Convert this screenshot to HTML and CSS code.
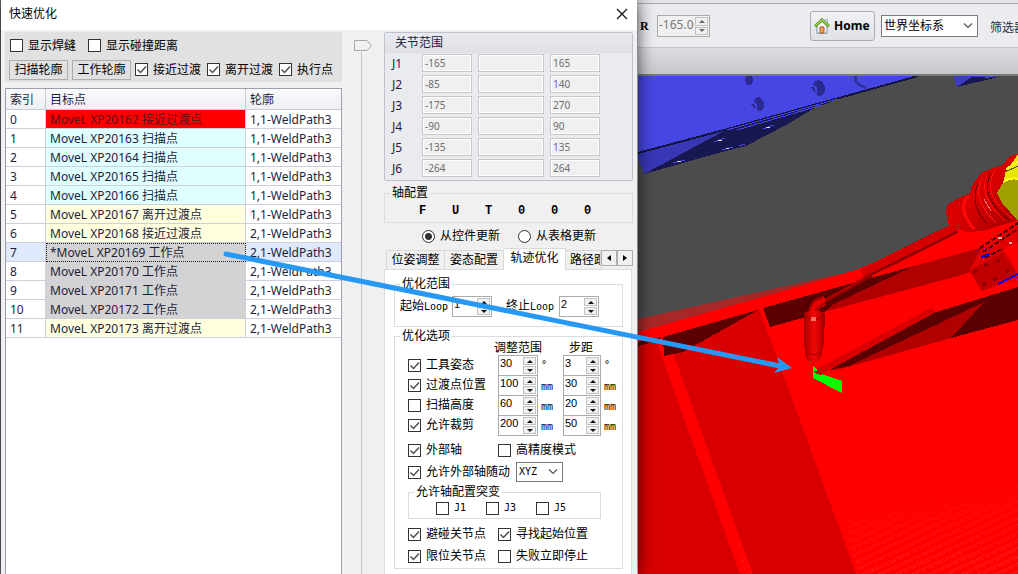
FILE: index.html
```html
<!DOCTYPE html>
<html lang="zh-CN">
<head>
<meta charset="utf-8">
<title>快速优化</title>
<link rel="stylesheet" href="styles.css">
</head>
<body>
<div class="app">
<section class="dialog">
  <header class="titlebar">
    <h1>快速优化</h1>
    <button class="close" aria-label="关闭"><svg width="12" height="12" viewBox="0 0 12 12"><path d="M1 1L11 11M11 1L1 11" stroke="#111" stroke-width="1.2"/></svg></button>
  </header>
  <div class="dialog-body">
    <div class="left">
      <div class="options">
        <div class="row first">
          <label class="check"><input type="checkbox">显示焊缝</label>
          <label class="check"><input type="checkbox">显示碰撞距离</label>
        </div>
        <div class="row second">
          <button class="push">扫描轮廓</button>
          <button class="push">工作轮廓</button>
          <label class="check"><input type="checkbox" checked>接近过渡</label>
          <label class="check"><input type="checkbox" checked>离开过渡</label>
          <label class="check"><input type="checkbox" checked>执行点</label>
        </div>
      </div>
      <div class="grid">
        <table>
          <colgroup><col class="c-index"><col class="c-target"><col></colgroup>
          <thead><tr><th>索引</th><th>目标点</th><th>轮廓</th></tr></thead>
          <tbody>
            <tr><td>0</td><td class="red">MoveL XP20162 接近过渡点</td><td>1,1-WeldPath3</td></tr>
            <tr><td>1</td><td class="cyan">MoveL XP20163 扫描点</td><td>1,1-WeldPath3</td></tr>
            <tr><td>2</td><td class="cyan">MoveL XP20164 扫描点</td><td>1,1-WeldPath3</td></tr>
            <tr><td>3</td><td class="cyan">MoveL XP20165 扫描点</td><td>1,1-WeldPath3</td></tr>
            <tr><td>4</td><td class="cyan">MoveL XP20166 扫描点</td><td>1,1-WeldPath3</td></tr>
            <tr><td>5</td><td class="yellow">MoveL XP20167 离开过渡点</td><td>1,1-WeldPath3</td></tr>
            <tr><td>6</td><td class="yellow">MoveL XP20168 接近过渡点</td><td>2,1-WeldPath3</td></tr>
            <tr class="selected"><td>7</td><td class="gray focus">*MoveL XP20169 工作点</td><td>2,1-WeldPath3</td></tr>
            <tr><td>8</td><td class="gray">MoveL XP20170 工作点</td><td>2,1-WeldPath3</td></tr>
            <tr><td>9</td><td class="gray">MoveL XP20171 工作点</td><td>2,1-WeldPath3</td></tr>
            <tr><td>10</td><td class="gray">MoveL XP20172 工作点</td><td>2,1-WeldPath3</td></tr>
            <tr><td>11</td><td class="yellow">MoveL XP20173 离开过渡点</td><td>2,1-WeldPath3</td></tr>
          </tbody>
        </table>
      </div>
    </div>
    <div class="track"><input type="range" min="0" max="100" value="0" aria-label="位置"></div>
    <div class="right">
      <section class="joints">
        <h2>关节范围</h2>
        <div class="joint-grid">
          <label for="j1">J1</label><input id="j1" value="-165" disabled><input aria-label="J1 当前" disabled><input aria-label="J1 上限" value="165" disabled>
          <label for="j2">J2</label><input id="j2" value="-85" disabled><input aria-label="J2 当前" disabled><input aria-label="J2 上限" value="140" disabled>
          <label for="j3">J3</label><input id="j3" value="-175" disabled><input aria-label="J3 当前" disabled><input aria-label="J3 上限" value="270" disabled>
          <label for="j4">J4</label><input id="j4" value="-90" disabled><input aria-label="J4 当前" disabled><input aria-label="J4 上限" value="90" disabled>
          <label for="j5">J5</label><input id="j5" value="-135" disabled><input aria-label="J5 当前" disabled><input aria-label="J5 上限" value="135" disabled>
          <label for="j6">J6</label><input id="j6" value="-264" disabled><input aria-label="J6 当前" disabled><input aria-label="J6 上限" value="264" disabled>
        </div>
      </section>
      <fieldset class="axis">
        <legend>轴配置</legend>
        <div class="flags"><span>F</span><span>U</span><span>T</span><span>0</span><span>0</span><span>0</span></div>
      </fieldset>
      <div class="sources">
        <label class="check"><input type="radio" name="source" checked>从控件更新</label>
        <label class="check"><input type="radio" name="source">从表格更新</label>
      </div>
      <div class="tabs">
        <button class="tab">位姿调整</button><button class="tab">姿态配置</button><button class="tab active">轨迹优化</button><button class="tab cut">路径跟踪</button>
        <button class="scroll" aria-label="向左"><i class="tri left-tri"></i></button><button class="scroll" aria-label="向右"><i class="tri right-tri"></i></button>
      </div>
      <div class="page">
        <fieldset class="range">
          <legend>优化范围</legend>
          <div class="loops">
            <label for="start">起始<span class="mono">Loop</span></label>
            <div class="spin tall"><input id="start" value="1"><span class="arrows"><button aria-label="增加"></button><button aria-label="减少"></button></span></div>
            <label for="end" class="end">终止<span class="mono">Loop</span></label>
            <div class="spin tall"><input id="end" value="2"><span class="arrows"><button aria-label="增加"></button><button aria-label="减少"></button></span></div>
          </div>
        </fieldset>
        <fieldset class="choices">
          <legend>优化选项</legend>
          <div class="tuning">
            <span></span><span class="head wide">调整范围</span><span class="head step">步距</span>
            <label class="check"><input type="checkbox" checked>工具姿态</label>
            <div class="spin"><input aria-label="工具姿态 调整范围" value="30"><span class="arrows"><button aria-label="增加"></button><button aria-label="减少"></button></span></div><span class="unit deg">°</span>
            <div class="spin"><input aria-label="工具姿态 步距" value="3"><span class="arrows"><button aria-label="增加"></button><button aria-label="减少"></button></span></div><span class="unit deg">°</span>
            <label class="check"><input type="checkbox" checked>过渡点位置</label>
            <div class="spin"><input aria-label="过渡点位置 调整范围" value="100"><span class="arrows"><button aria-label="增加"></button><button aria-label="减少"></button></span></div><span class="unit">mm</span>
            <div class="spin"><input aria-label="过渡点位置 步距" value="30"><span class="arrows"><button aria-label="增加"></button><button aria-label="减少"></button></span></div><span class="unit">mm</span>
            <label class="check"><input type="checkbox">扫描高度</label>
            <div class="spin"><input aria-label="扫描高度 调整范围" value="60"><span class="arrows"><button aria-label="增加"></button><button aria-label="减少"></button></span></div><span class="unit">mm</span>
            <div class="spin"><input aria-label="扫描高度 步距" value="20"><span class="arrows"><button aria-label="增加"></button><button aria-label="减少"></button></span></div><span class="unit">mm</span>
            <label class="check"><input type="checkbox" checked>允许裁剪</label>
            <div class="spin"><input aria-label="允许裁剪 调整范围" value="200"><span class="arrows"><button aria-label="增加"></button><button aria-label="减少"></button></span></div><span class="unit">mm</span>
            <div class="spin"><input aria-label="允许裁剪 步距" value="50"><span class="arrows"><button aria-label="增加"></button><button aria-label="减少"></button></span></div><span class="unit">mm</span>
          </div>
          <div class="pairs">
            <label class="check"><input type="checkbox" checked>外部轴</label>
            <label class="check"><input type="checkbox">高精度模式</label>
          </div>
          <div class="follow">
            <label class="check"><input type="checkbox" checked>允许外部轴随动</label>
            <select class="combo axes" aria-label="随动轴"><option>XYZ</option></select>
          </div>
          <fieldset class="jumps">
            <legend>允许轴配置突变</legend>
            <div class="jump-row">
              <label class="check"><input type="checkbox"><span class="mono">J1</span></label>
              <label class="check"><input type="checkbox"><span class="mono">J3</span></label>
              <label class="check"><input type="checkbox"><span class="mono">J5</span></label>
            </div>
          </fieldset>
          <div class="pairs">
            <label class="check"><input type="checkbox" checked>避碰关节点</label>
            <label class="check"><input type="checkbox" checked>寻找起始位置</label>
            <label class="check"><input type="checkbox" checked>限位关节点</label>
            <label class="check"><input type="checkbox">失败立即停止</label>
          </div>
        </fieldset>
      </div>
    </div>
  </div>
</section>
<main class="workspace">
  <div class="toolbar">
    <label for="rot" class="rot-label">R</label>
    <div class="spin rot"><input id="rot" value="-165.000" disabled><span class="arrows"><button aria-label="增加" disabled></button><button aria-label="减少" disabled></button></span></div>
    <button class="home">
      <svg width="16" height="16" viewBox="0 0 16 16"><path d="M3 7v8.300h10V7L8 2.500z" fill="#f7f8fb" stroke="#7b8bb0"/><path d="M11.500 1.500h2v4l-2-2z" fill="#e8edf5" stroke="#8a98b5" stroke-width=".7"/><path d="M1 8.300L8 2l7 6.300" fill="none" stroke="#4f8a1c" stroke-width="3"/><path d="M1.200 8L8 1.900 14.800 8" fill="none" stroke="#a7d85c" stroke-width="1.300"/><path d="M6 15V9h4v6z" fill="#eda65b" stroke="#a85619"/></svg>
      Home
    </button>
    <select class="combo coord" aria-label="坐标系"><option>世界坐标系</option></select>
    <span class="filter">筛选器</span>
  </div>
  <div class="strip"></div>
  <svg class="scene" viewBox="638 76 380 498" preserveAspectRatio="xMinYMin slice" shape-rendering="crispEdges">
    <defs>
      <linearGradient id="tube" x1="0" x2="1"><stop offset="0" stop-color="#900"/><stop offset=".2" stop-color="#c00"/><stop offset=".5" stop-color="#f00808"/><stop offset=".8" stop-color="#c80000"/><stop offset="1" stop-color="#800"/></linearGradient>
      <linearGradient id="arm" x1="0" y1="0" x2="1" y2="1"><stop offset="0" stop-color="#900"/><stop offset=".45" stop-color="#dd0000"/><stop offset="1" stop-color="#a00000"/></linearGradient>
      <linearGradient id="fade" x1="0" y1="0" x2=".25" y2="1"><stop offset=".1" stop-color="#fff" stop-opacity="0"/><stop offset="1" stop-color="#fff"/></linearGradient>
      <pattern id="grain" width="8" height="7" patternUnits="userSpaceOnUse" patternTransform="rotate(-25)"><path d="M0 2H8M2 4H7" stroke="#ff3030" stroke-width="1" stroke-dasharray="1 1"/></pattern>
      <mask id="grain-mask"><path d="M846 520L1018 485V574H857z" fill="url(#fade)"/></mask>
    </defs>
    <rect x="638" y="76" width="380" height="498" fill="#4c4c4c"/>
    <path d="M638 76H918L838 98 724 130 638 153z" fill="#4646e2"/>
    <path d="M638 153L724 131 644 174 638 158z" fill="#3838b6"/>
    <path d="M724 131L838 98 829 103 816 107 788 124 746 146 722 152 644 174z" fill="#181850"/>
    <path d="M638 153L724 130 918 76" fill="none" stroke="#141440" stroke-width="2"/>
    <path d="M727 130L838 99M737 130L822 105" stroke="#4646e2" fill="none"/>
    <path d="M855 76q0 7 5 9l6 3" fill="none" stroke="#3030a0" stroke-width="3"/>
    <ellipse cx="749" cy="80" rx="4" ry="5" fill="#2a2a90"/>
    <ellipse cx="759" cy="104" rx="5" ry="7" fill="#2a2a90" transform="rotate(-15 759 104)"/>
    <ellipse cx="819" cy="88" rx="6" ry="8" fill="#2a2a90" transform="rotate(-15 819 88)"/>
    <path d="M752 102q5 1 4 7M812 86q6 0 4 8" stroke="#4646e2" stroke-width="2" fill="none"/>
    <path d="M752 104l3 4M812 87l3 5" stroke="#2a2a90" stroke-width="2"/>
    <path d="M763 129l11-4M714 142l11-4M722 150l11-3M673 163l12-3M739 146l6-2" stroke="#4646e2" stroke-width="1"/>
    <path d="M766 128l4-1M718 141l4-1M726 149l3-1M677 162l4-1" stroke="#dde" stroke-width="1"/>
    <path d="M953 76H998L957 87z" fill="#3c3cc2"/><path d="M972 77H998L957 87z" fill="#181850"/><path d="M985 78l8-2" stroke="#5555f0"/>
    <path d="M638 319L853 271 853 275 638 334z" fill="#a82828"/>
    <path d="M638 332L780 292 853 271 950 232 1018 218V574H638z" fill="#f00"/>
    <path d="M763 308L914 266 834 304 824 312 770 327z" fill="#5a0000"/>
    <path d="M914 266L984 247 969 273 824 312 834 304z" fill="#b00000"/>
    <path d="M638 344L661 338 658 346 740 574H638z" fill="#d80000"/>
    <path d="M638 342L661 337 659 341 638 346z" fill="#5a0000"/>
    <path d="M663 337L759 309 789 390 856 574H753L673 353z" fill="#d80000"/>
    <path d="M663 337L758 310 683 352 664 356z" fill="#5a0000"/>
    <path d="M933 313L1018 287V320L951 338 984 302 936 327z" fill="#5a0000"/>
    <path d="M984 302L951 338 830 372 849 364z" fill="#b00000"/>
    <path d="M821 372L933 313 984 302 849 366z" fill="#5a0000"/>
    <path d="M813 371L931 308 936 312 820 375z" fill="#d80000"/>
    <path d="M846 520L1018 485V574H857z" fill="url(#grain)" mask="url(#grain-mask)"/>
    <path d="M740 540l13 34h-12z" fill="url(#grain)" opacity=".5"/>
    <path d="M821 303L872 275" stroke="#8c0000" stroke-width="4"/><path d="M822 302L872 274" stroke="#b00000" stroke-width="2"/>
    <path d="M814 319V310Q815 303 825 301" fill="none" stroke="#b40000" stroke-width="10"/>
    <path d="M813 319V309Q815 303 825 300" fill="none" stroke="#ee0000" stroke-width="4"/>
    <path d="M863 274L956 228" stroke="#960000" stroke-width="11"/><path d="M862 273L955 227" stroke="#d60000" stroke-width="8"/>
    <path d="M804 313L808 311H820L825 313 824 342 821 359 817 362H811L806 359 804 342z" fill="url(#tube)"/>
    <path d="M804 315q10 9 20 0M805 352q9 5 17 0" fill="none" stroke="#a00000"/>
    <path d="M811 317h5v4h-5z" fill="#ff7060"/><path d="M813 362V378" stroke="#a00000"/>
    <path d="M946 213L947 205 955 200 970 193 973 184 981 173 990 169 1003 165 1010 156 1018 154V220L983 231 967 232 955 228 949 226z" fill="url(#arm)"/>
    <path d="M968 196q-11 13 6 33" fill="none" stroke="#ff0808" stroke-width="3"/>
    <path d="M982 178q-11 20 14 45M987 175q-9 22 18 46M995 170q-15 24 19 50" fill="none" stroke="#ff1010" stroke-width="1"/>
    <path d="M978 184q-9 20 9 40M991 173q-13 23 18 47" fill="none" stroke="#700000"/>
    <path d="M984 199l7 12" stroke="#ff7060"/>
    <path d="M1018 154L1005 173 1004 181 997 193 1002 203 1018 221z" fill="#a0a000"/>
    <path d="M1018 154L1005 173 1004 181 1018 178z" fill="#e6e600"/><path d="M1003 182q8-5 15-3M1006 169l12-7" stroke="#ffff20" stroke-width="2" fill="none"/><path d="M1005 172l13-6" stroke="#555500"/>
    <path d="M981 249L1000 237 1018 222V280L982 291 969 271z" fill="#e20000"/>
    <path d="M980 248L1018 223M983 252L1018 229M985 258L1002 249" stroke="#500000" stroke-width="2" stroke-dasharray="5 2"/>
    <path d="M969 271L1003 252 1018 275 982 291z" fill="#c00000"/><path d="M1004 249L1018 243V273z" fill="#f00"/>
    <path d="M981 257l9-3M998 284l20-10" stroke="#0000f0" stroke-width="2"/>
    <g fill="#900000"><circle cx="975" cy="271" r="2"/><circle cx="986" cy="265" r="2"/><circle cx="998" cy="261" r="2"/><circle cx="984" cy="284" r="2"/><circle cx="995" cy="279" r="2"/><circle cx="1007" cy="271" r="2"/></g>
    <path d="M998 238h4M1009 243h3" stroke="#ffb0a0" stroke-width="2"/>
    <path d="M813 366l4 3v5l5 0L842 381V393L813 378z" fill="#0f0"/><path d="M814 371L824 369 822 375 816 374z" fill="#d00000"/>
  </svg>
</main>
<svg class="pointer" width="1018" height="574" viewBox="0 0 1018 574" aria-hidden="true"><path d="M226 254L780 366" stroke="#2699f7" stroke-width="5" stroke-linecap="round"/><path d="M792 368L777 357 780 366 774 373z" fill="#2699f7"/></svg>
</div>
</body>
</html>
```
FILE: styles.css
```css
* { box-sizing: border-box; }
body { margin: 0; overflow: hidden; font: 12px/14px "Liberation Sans", "Noto Sans CJK SC", sans-serif; color: #000; background: #6b6f70; }
button, input, select { font: inherit; color: inherit; margin: 0; padding: 0; border-radius: 0; }
input { min-width: 0; }
label, legend, th, td, button { white-space: nowrap; }
fieldset { margin: 0; padding: 0; min-width: 0; border: 1px solid #dcdcdc; }
legend { padding: 0 2px; margin-left: 5px; }
.app { position: relative; display: flex; height: 100vh; overflow: hidden; }

.dialog { position: relative; z-index: 1; flex: none; display: flex; flex-direction: column; margin-left: 1px; width: 636px; background: #f0f0f0; box-shadow: 0 0 16px rgba(0,0,0,.75); }
.titlebar { flex: none; display: flex; align-items: center; justify-content: space-between; height: 30px; padding: 0 9px 2px 8px; background: #fff; }
.titlebar h1 { margin: 0; font-size: 12px; font-weight: 400; }
.close { display: flex; border: 0; background: none; }
.dialog-body { flex: 1; min-height: 0; display: flex; padding: 2px 4px 0 4px; }

.check { display: flex; align-items: center; gap: 5px; }
.check input { flex: none; appearance: none; width: 13px; height: 13px; border: 1px solid #333; background: #fff center no-repeat; }
.check input:checked { background-image: url("data:image/svg+xml,%3Csvg xmlns='http://www.w3.org/2000/svg' width='11' height='11'%3E%3Cpath d='M1.500 5.500L4.500 8.500 10 2.500' fill='none' stroke='%23505050' stroke-width='1.500'/%3E%3C/svg%3E"); }
.check input[type=radio] { border-radius: 50%; }
.check input[type=radio]:checked { background: radial-gradient(circle, #333 3px, #fff 4px); }

.left { flex: 0 0 337px; display: flex; flex-direction: column; gap: 6px; }
.options { height: 50px; padding: 6px 4px 2px; background: #e1e1e1; }
.row { display: flex; align-items: center; }
.first { gap: 12px; height: 15px; padding-left: 1px; }
.second { height: 21px; margin-top: 6px; gap: 6px; }
.push { width: 59px; height: 20px; border: 1px solid #adadad; background: #e1e1e1; }
.push + .push { margin-left: -2px; }
.push + .check { margin-left: -2px; }
.grid { flex: 1; border: 1px solid #9c9fb0; border-bottom: 0; background: #fff; }
table { width: 100%; table-layout: fixed; border-collapse: separate; border-spacing: 0; color: #1e1e3a; font: 12px/16px "Noto Sans", "Noto Sans CJK SC", sans-serif; }
.c-index { width: 40px; }
.c-target { width: 200px; }
th { height: 21px; padding: 2px 4px 0; text-align: left; font-weight: 400; background: linear-gradient(#fafafb, #edeff2); border: solid #c8cbd6; border-width: 0 1px 1px 0; }
td { height: 19px; padding: 2px 4px 0; border: solid #cdd0dc; border-width: 0 1px 1px 0; overflow: hidden; }
th:last-child, td:last-child { border-right: 0; }
.red { background: #f00; color: #5a1020; }
.cyan { background: #e0ffff; }
.yellow { background: #ffffe0; }
.gray { background: #d3d3d3; }
.selected td { background: #e0e8fc; }
.selected .gray { background: #d3d3d3; outline: 1px dotted #222; outline-offset: -1px; }

.track { flex: 1; display: flex; justify-content: center; padding-top: 8px; background: linear-gradient(#c3c3ca, #c3c3ca) 19px 20px / 1px 100% no-repeat; }
.track input { appearance: none; writing-mode: vertical-lr; width: 18px; height: 100%; background: none; }
.track input::-webkit-slider-thumb { appearance: none; width: 18px; height: 11px; background: url("data:image/svg+xml,%3Csvg xmlns='http://www.w3.org/2000/svg' width='18' height='11'%3E%3Cpath d='M.5.5H13L17.500 5.500 13 10.500H.5z' fill='%23f1f1f3' stroke='%23a5a5aa'/%3E%3C/svg%3E"); }

.right { flex: 0 0 249px; min-width: 0; display: flex; flex-direction: column; }
.joints { border: 1px solid #bfc2ce; border-radius: 2px; background: #eaebef; height: 149px; }
.joints h2 { margin: 0; height: 20px; padding: 3px 10px; font-size: 12px; font-weight: 400; color: #1e1e3a; background: linear-gradient(#e9eaef, #dfe0e6); }
.joint-grid { display: grid; grid-template-columns: 24px 50px 66px 50px; grid-auto-rows: 18px; gap: 3px 6px; padding: 1px 7px; color: #1e1e3a; align-items: center; }
.joint-grid label { font: 12px/14px "Noto Sans", sans-serif; padding-top: 1px; }
.joint-grid input { width: 100%; height: 18px; padding: 0 2px; border: 1px solid #c6c6c6; box-shadow: inset 0 0 0 1px #fff; background: #f0f0f0; color: #6d6d6d; font: 10px/14px "Noto Sans", sans-serif; }
.axis { margin-top: 5px; height: 37px; }
.flags { display: grid; grid-template-columns: repeat(6, 33px); padding-left: 21px; padding-top: 4px; text-align: center; font: bold 12px/14px "Liberation Mono", monospace; }
.sources { display: flex; gap: 18px; padding: 6px 0 0 38px; }
.tabs { display: flex; align-items: flex-end; height: 21px; margin-top: 5px; padding-left: 2px; }
.tab { flex: 0 0 59px; height: 19px; border: 1px solid #d9d9d9; border-bottom: 0; background: #f0f0f0; text-align: center; }
.tab + .tab { border-left: 0; }
.tab.active { position: relative; flex-basis: 62px; height: 22px; padding-bottom: 3px; margin-bottom: -1px; background: #fff; }
.tab.cut { flex: 1; min-width: 0; overflow: hidden; padding-left: 4px; text-align: left; }
.scroll { flex: 0 0 16px; height: 16px; margin-bottom: 3px; display: grid; place-items: center; border: 1px solid #adadad; background: #f0f0f0; }
.tri { border: 3px solid transparent; }
.left-tri { border-right: 4px solid #000; border-left: 0; }
.right-tri { border-left: 4px solid #000; border-right: 0; }
.page { flex: 1; min-height: 0; margin-right: 1px; padding: 7px 8px 0 9px; border: 1px solid #dcdcdc; border-bottom: 0; background: #fff; }
.mono { font: 10px/14px "DejaVu Sans Mono", monospace; }
.range { height: 50px; }
.loops { display: flex; align-items: center; padding: 5px 0 0 5px; }
.loops label { width: 52px; }
.loops .end { margin-left: 14px; width: 53px; }

.spin { display: flex; height: 21px; border: 1px solid #ababab; background: #fff; }
.spin input { flex: 1; width: 0; height: 14px; padding: 0 0 0 1px; border: 0; background: none; font: 11px/14px "Liberation Sans", sans-serif; outline: 0; }
.arrows { flex: 0 0 15px; display: grid; grid-template-rows: 1fr 1fr; gap: 1px; padding: 1px; }
.arrows button { display: grid; place-items: center; border: 1px solid #c2c2c2; background: #f0f0f0; }
.arrows button::before { content: ""; border: 3px solid transparent; border-top: 0; border-bottom-color: #111; }
.arrows button + button::before { border-bottom: 0; border-top: 3px solid #111; }
.spin.tall { width: 40px; }

.choices { margin-top: 2px; padding: 0 0 1px; }
.tuning { display: grid; grid-template-columns: 90px 40px 25px 38px 1fr; grid-template-rows: 14px repeat(4, 20px); padding-left: 13px; align-items: center; margin-top: -2px; }
.tuning .spin { height: 21px; align-self: start; }
.head.wide { grid-column: 2 / 4; margin-left: -4px; }
.head.step { grid-column: 4 / 6; padding-left: 6px; }
.unit { padding: 4px 0 0 3px; font: 10px/14px "DejaVu Sans Mono", monospace; }
.unit.deg { padding-top: 0; }
.pairs { display: grid; grid-template-columns: 90px 1fr; grid-auto-rows: 22px; align-items: center; padding-left: 13px; padding-top: 4px; }
.follow { display: flex; gap: 6px; align-items: center; height: 22px; padding-left: 13px; }
.combo { appearance: none; border: 1px solid #7a7a7a; background: #fff right 4px center / 10px 6px no-repeat url("data:image/svg+xml,%3Csvg xmlns='http://www.w3.org/2000/svg' width='10' height='6'%3E%3Cpath d='M1 .5L5 4.500 9 .5' fill='none' stroke='%23555' stroke-width='1.200'/%3E%3C/svg%3E"); }
.axes { width: 47px; height: 20px; padding-left: 2px; font: 10px/14px "DejaVu Sans Mono", monospace; }
.jumps { margin: 2px 21px 0 13px; height: 34px; }
.jump-row { display: flex; gap: 20px; padding: 2px 0 0 27px; }

.workspace { flex: 1; min-width: 0; display: flex; flex-direction: column; padding-left: 1px; background: #d8d9dd; }
.toolbar { flex: none; display: flex; align-items: center; height: 48px; padding: 2px 0 0 2px; overflow: hidden; background: #ebecf0; border-top: 3px solid #e2e3e8; border-bottom: 1px solid #c4c6cc; box-shadow: inset 0 1px #a9abb3; }
.rot-label { flex: none; width: 17px; font: bold 12px/14px "Liberation Serif", serif; }
.rot { flex: 0 0 53px; height: 22px; margin-right: 100px; background: #f0f0f0; color: #777; }
.rot input { height: 18px; font: 12px/18px "Noto Sans", sans-serif; }
.rot .arrows button::before { opacity: .6; }
.home { flex: 0 0 65px; display: flex; align-items: center; gap: 4px; height: 30px; padding-left: 3px; border: 1px solid #a9acb8; border-radius: 3px; background: linear-gradient(#f1f2f5, #dfe1e6); font: bold 12px/16px "Noto Sans", sans-serif; }
.coord { flex: 0 0 97px; height: 22px; margin-left: 6px; padding-left: 2px; }
.filter { flex: none; margin-left: 12px; padding-top: 3px; color: #2b2b40; }
.strip { flex: none; height: 28px; background: linear-gradient(#dcdde1, #c5c7cb); border-bottom: 2px solid #777a7d; }
.scene { flex: 1; min-height: 0; width: 100%; display: block; }
.pointer { position: absolute; z-index: 2; left: 0; top: 0; pointer-events: none; }
```
